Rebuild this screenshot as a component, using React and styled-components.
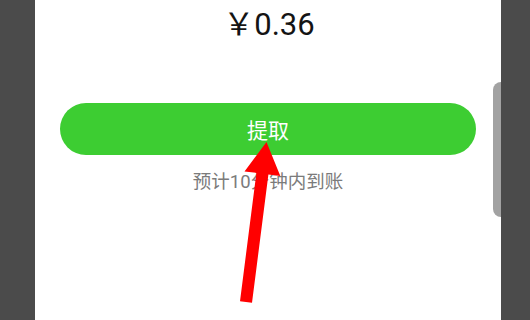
import React from 'react'
import styled, { createGlobalStyle } from 'styled-components'

const GlobalStyle = createGlobalStyle`
  html, body {
    margin: 0;
    padding: 0;
    background: #4b4b4b;
  }
`

const Page = styled.div`
  position: relative;
  display: flex;
  width: 530px;
  height: 320px;
  overflow: hidden;
  background: #4b4b4b;
  font-family: Roboto, "Noto Sans CJK SC", sans-serif;
`

const Gutter = styled.div`
  width: ${props => props.width}px;
  flex-shrink: 0;
`

const Panel = styled.div`
  position: relative;
  width: 466px;
  height: 100%;
  background: #fff;
  display: flex;
  flex-direction: column;
  align-items: center;
`

const Amount = styled.div`
  padding-top: 5px;
  line-height: 40px;
  font-size: 31px;
  color: #141414;
  padding-left: 2px;
`

const WithdrawButton = styled.button`
  margin-top: 58px;
  width: 416px;
  height: 52px;
  border: none;
  border-radius: 26px;
  background: #3dcd32;
  color: #fff;
  font-family: "Noto Sans CJK SC", sans-serif;
  font-size: 21px;
  display: flex;
  align-items: center;
  justify-content: center;
  padding: 0;
`

const Hint = styled.div`
  margin-top: 15px;
  line-height: 24px;
  font-size: 18.5px;
  color: #7b7b7b;
`

const ScrollHandle = styled.div`
  position: absolute;
  left: 458px;
  top: 82px;
  width: 8px;
  height: 135px;
  border-radius: 8px 0 0 8px;
  background: #a2a2a2;
`

const ArrowLayer = styled.svg`
  position: absolute;
  left: 0;
  top: 0;
  pointer-events: none;
`

const App = () => {
  return (
    <Page>
      <GlobalStyle />
      <Gutter width={35} />
      <Panel>
        <Amount>￥0.36</Amount>
        <WithdrawButton>提取</WithdrawButton>
        <Hint>预计10分钟内到账</Hint>
        <ScrollHandle />
      </Panel>
      <ArrowLayer width="530" height="320" viewBox="0 0 530 320">
        <polygon
          points="266.5,142 280.3,176 268.4,174.5 252,302.8 240,301.2 256.4,172.9 244.5,171.4"
          fill="#ff0000"
        />
      </ArrowLayer>
    </Page>
  )
}

export default App
